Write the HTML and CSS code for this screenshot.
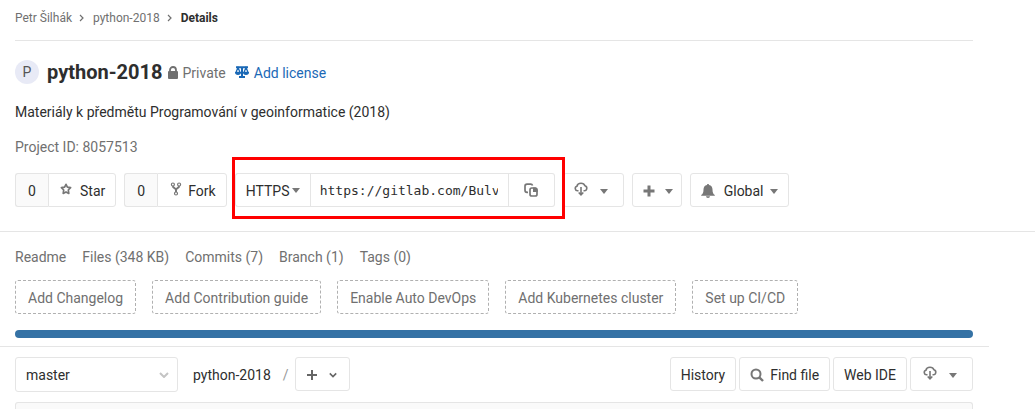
FILE: index.html
```html
<!DOCTYPE html>
<html lang="en">
<head>
<meta charset="utf-8">
<meta name="viewport" content="width=device-width, initial-scale=1">
<title>Details · python-2018</title>
<link rel="stylesheet" href="styles.css">
</head>
<body>
<svg class="sprite" aria-hidden="true">
  <symbol id="cloud" viewBox="0 0 14 14"><path d="M4.500 8.800H3.600a2.300 2.300 0 0 1-.7-4.500C3.300 2.300 5 1.300 7 1.300c2 0 3.400.9 3.900 2.400a2.600 2.600 0 0 1-.6 5.100h-.8M7 5v8M4.700 10.500 7 12.800l2.300-2.300" fill="none" stroke="currentColor" stroke-width="1.600"/></symbol>
  <symbol id="caret" viewBox="0 0 8 5"><path d="M0 0h8L4 5z" fill="currentColor"/></symbol>
  <symbol id="chevron" viewBox="0 0 10 6"><path d="m1 1 4 4 4-4" fill="none" stroke="currentColor" stroke-width="2"/></symbol>
  <symbol id="next" viewBox="0 0 6 8"><path d="m1 1 3 3-3 3" fill="none" stroke="currentColor" stroke-width="1.200"/></symbol>
</svg>
<header class="top">
  <nav class="breadcrumbs" aria-label="Breadcrumb">
    <a href="#">Petr Šilhák</a><svg class="next"><use href="#next"/></svg><a href="#">python-2018</a><svg class="next"><use href="#next"/></svg><strong>Details</strong>
  </nav>
</header>
<section class="project">
  <div class="heading">
    <span class="avatar">P</span>
    <h1>python-2018</h1>
    <span class="private"><svg class="lock" viewBox="0 0 10 13"><path d="M2 6V4a3 3 0 0 1 6 0v2" fill="none" stroke="currentColor" stroke-width="1.800"/><rect y="5" width="10" height="8" rx="1" fill="currentColor"/></svg>Private</span>
    <a class="license" href="#"><svg class="scale" viewBox="0 0 14 12"><path d="M1 1.200h12M7 1v9M4 11h6" fill="none" stroke="currentColor" stroke-width="2"/><path d="M3 1.500.9 6.500h4.200zM11 1.500 8.900 6.500h4.200z" fill="none" stroke="currentColor" stroke-width="1.300"/><path d="M0 6h6a3 3 0 0 1-6 0zM8 6h6a3 3 0 0 1-6 0z" fill="currentColor"/></svg>Add license</a>
  </div>
  <p class="description">Materiály k předmětu Programování v geoinformatice (2018)</p>
  <p class="project-id">Project ID: 8057513</p>
  <div class="actions">
    <div class="group"><span class="count">0</span><button class="button" type="button"><svg class="icon star" viewBox="0 0 12 12"><path d="m6 1.300 1.400 2.900 3.200.5-2.300 2.300.5 3.400L6 8.900l-2.800 1.500.5-3.400L1.400 4.700l3.200-.5z" fill="none" stroke="currentColor" stroke-width="1.700" stroke-linejoin="round"/></svg>Star</button></div>
    <div class="group"><span class="count">0</span><button class="button" type="button"><svg class="icon fork" viewBox="0 0 12 14"><g fill="none" stroke="currentColor"><path d="M2.800 4.200C3 6.500 6 5.800 6 8v2M9.200 4.200C9 6.500 6 5.800 6 8" stroke-width="2"/><circle cx="2.900" cy="2.500" r="1.500" stroke-width="1.200"/><circle cx="9.100" cy="2.500" r="1.500" stroke-width="1.200"/><circle cx="6" cy="11.500" r="1.500" stroke-width="1.200"/></g></svg>Fork</button></div>
    <div class="group clone">
      <div class="select protocol"><select aria-label="Clone protocol"><option>HTTPS</option></select><svg class="caret"><use href="#caret"/></svg></div>
      <input class="url" type="text" aria-label="Repository URL" value="https://gitlab.com/Bulv" readonly>
      <button class="button copy" type="button" aria-label="Copy URL"><svg class="icon" viewBox="0 0 14 14"><path d="M4 9.300H3a2 2 0 0 1-2-2V3.200a2 2 0 0 1 2-2h3.700a2 2 0 0 1 1.900 1.300" fill="none" stroke="currentColor" stroke-width="1.700"/><rect x="6" y="5" width="7" height="8" rx="1.800" fill="none" stroke="currentColor" stroke-width="1.700"/><path d="M9 4.500h2.500L13.700 7v2H9z" fill="currentColor"/></svg></button>
    </div>
    <button class="button dropdown" type="button" aria-label="Download"><svg class="icon cloud"><use href="#cloud"/></svg><svg class="caret"><use href="#caret"/></svg></button>
    <button class="button add" type="button" aria-label="Create"><svg class="plus" viewBox="0 0 12 12"><path d="M6 .5v11M.5 6h11" stroke="currentColor" stroke-width="3"/></svg><svg class="caret"><use href="#caret"/></svg></button>
    <button class="button global" type="button"><svg class="icon" viewBox="0 0 14 14"><path d="M7 0c.7 0 1 .4 1 1 2.400.5 3.500 2.200 3.500 4.500 0 3 .7 4.600 2.300 5.500v.8H.2V11c1.600-.9 2.300-2.500 2.300-5.500C2.500 3.200 3.600 1.500 6 1c0-.6.300-1 1-1zM5 12.300h4a2 1.700 0 0 1-4 0z" fill="currentColor"/></svg>Global<svg class="caret"><use href="#caret"/></svg></button>
  </div>
</section>
<section class="overview">
  <nav class="stats" aria-label="Repository"><a href="#">Readme</a><a href="#">Files (348 KB)</a><a href="#">Commits (7)</a><a href="#">Branch (1)</a><a href="#">Tags (0)</a></nav>
  <div class="suggestions"><a href="#">Add Changelog</a><a href="#">Add Contribution guide</a><a href="#">Enable Auto DevOps</a><a href="#">Add Kubernetes cluster</a><a href="#">Set up CI/CD</a></div>
  <div class="languages"></div>
</section>
<main class="files">
  <div class="toolbar">
    <div class="select branch"><select aria-label="Branch"><option>master</option></select><svg class="chevron"><use href="#chevron"/></svg></div>
    <a class="path" href="#">python-2018</a><span class="slash">/</span>
    <button class="button new" type="button" aria-label="Add to tree"><svg class="plus" viewBox="0 0 12 12"><path d="M6 1v10M1 6h10" stroke="currentColor" stroke-width="2"/></svg><svg class="chevron small"><use href="#chevron"/></svg></button>
    <div class="tools">
      <button class="button" type="button">History</button>
      <button class="button find" type="button"><svg class="icon" viewBox="0 0 14 14"><circle cx="6" cy="6" r="4.500" fill="none" stroke="currentColor" stroke-width="2"/><path d="m9.300 9.300 3.700 3.700" stroke="currentColor" stroke-width="2.400"/></svg>Find file</button>
      <button class="button" type="button">Web IDE</button>
      <button class="button dropdown" type="button" aria-label="Download"><svg class="icon cloud"><use href="#cloud"/></svg><svg class="caret"><use href="#caret"/></svg></button>
    </div>
  </div>
  <div class="panel"></div>
</main>
</body>
</html>
```
FILE: styles.css
```css
* { box-sizing: border-box; }
html { height: 100%; }
body {
  margin: 0;
  height: 100%;
  overflow: hidden;
  display: flex;
  flex-direction: column;
  background: #fff;
  color: #2e2e2e;
  font: 14px/20px Roboto, sans-serif;
}
a { color: inherit; text-decoration: none; }
svg { flex: none; }
p { margin: 0; }
.sprite { position: absolute; width: 0; height: 0; }
.top, .project, .overview { padding: 0 62px 0 15px; }
.breadcrumbs {
  display: flex;
  align-items: center;
  height: 41px;
  padding-bottom: 5px;
  border-bottom: 1px solid #e5e5e5;
  font-size: 12px;
  color: #707070;
}
.breadcrumbs strong { color: #2e2e2e; }
.next { width: 6px; height: 8px; margin: 0 8px 0 7px; }
.heading { display: flex; align-items: center; height: 24px; margin-top: 19px; }
.avatar {
  width: 24px;
  height: 24px;
  margin-right: 8px;
  border-radius: 50%;
  background: #e8eaf6;
  color: #555;
  line-height: 24px;
  text-align: center;
}
h1 { margin: 0 6px 0 0; font-size: 20px; line-height: 24px; }
.private, .license { display: flex; align-items: center; padding-top: 2px; }
.private { gap: 4px; color: #707070; }
.license { gap: 5px; margin-left: 9px; color: #1b69b6; }
.lock { width: 10px; height: 13px; margin-bottom: 2px; }
.scale { width: 14px; height: 12px; margin-bottom: 3px; }
.description { margin-top: 18px; }
.project-id { margin-top: 15px; color: #707070; }
.project { border-bottom: 1px solid #e5e5e5; padding-bottom: 24px; }
.actions { display: flex; gap: 8px; margin-top: 16px; }
.group { display: flex; }
.count, .button, .url, .select {
  height: 34px;
  border: 1px solid #e5e5e5;
  border-radius: 3px;
  background: #fff;
}
.count {
  width: 33px;
  background: #fafafa;
  border-right: 0;
  border-radius: 3px 0 0 3px;
  line-height: 34px;
  text-align: center;
}
.button {
  display: flex;
  align-items: center;
  margin: 0;
  padding: 2px 10px 0;
  color: #2e2e2e;
  font: inherit;
  white-space: nowrap;
}
.group .button { border-radius: 0 3px 3px 0; }
.button svg { color: #777; }
.icon { width: 14px; height: 14px; margin-right: 8px; }
.star { width: 12px; height: 12px; margin: 0 8px 4px 1px; }
.fork { width: 12px; margin: 0 6px 4px 2px; }
.caret { width: 8px; height: 5px; color: #777; }
.clone { position: relative; width: 320px; }
.clone::after {
  content: "";
  position: absolute;
  inset: -16px -10px -12px -3px;
  border: 3px solid #f00;
  pointer-events: none;
  z-index: 1;
}
.select { display: flex; align-items: center; position: relative; }
select {
  appearance: none;
  width: 100%;
  height: 100%;
  margin: 0;
  padding: 2px 10px 0;
  border: 0;
  background: none;
  color: #2e2e2e;
  font: inherit;
}
.select svg { position: absolute; right: 10px; pointer-events: none; }
.protocol { flex: none; width: 75px; border-right: 0; border-radius: 3px 0 0 3px; }
.url {
  flex: 1;
  min-width: 0;
  margin: 0;
  padding: 0 10px 0 9px;
  border-radius: 0;
  color: #2e2e2e;
  font: 13px "DejaVu Sans Mono", monospace;
}
.copy { width: 46px; padding-top: 0; justify-content: center; border-left: 0; }
.copy .icon { margin: 0; }
.cloud { margin: 0 12px 4px 0; }
.actions .dropdown { width: 61px; justify-content: flex-end; padding-right: 15px; }
.plus { width: 12px; height: 12px; }
.add { gap: 10px; padding: 2px 8px 0 10px; }
.global { gap: 6px; }
.global .icon { margin-right: 3px; }
.stats { display: flex; gap: 16px; margin-top: 15px; color: #707070; }
.suggestions { display: flex; gap: 16px; margin-top: 13px; color: #707070; }
.suggestions a { padding: 7px 12px 6px; height: 34px; line-height: 20px; border: 1px dashed #b0b0b0; border-radius: 3px; }
.languages { height: 8px; margin: 16px 0 8px; border-radius: 4px; background: #3572a5; }
.files {
  flex: 1;
  display: flex;
  flex-direction: column;
  min-height: 0;
  margin-right: 46px;
  padding: 10px 16px 0 15px;
  border-top: 1px solid #e5e5e5;
}
.toolbar { display: flex; }
.branch { height: 35px; width: 163px; margin-right: 15px; }
.branch select { padding-top: 0; }
.path, .slash { padding-top: 8px; }
.chevron { width: 10px; height: 6px; }
.branch .chevron { color: #c4c4c4; right: 8px; }
.slash { margin: 0 6px 0 12px; color: #999; }
.new { width: 55px; justify-content: space-between; padding-right: 12px; }
.button .small { width: 8px; color: #666; }
.new .plus { color: #666; }
.tools { display: flex; gap: 3px; margin-left: auto; }
.find .icon { margin-right: 6px; }
.tools .dropdown { width: 63px; padding-right: 15px; justify-content: flex-end; }
.panel { flex: 1; margin-top: 10px; border: 1px solid #e5e5e5; border-bottom: 0; border-radius: 3px 3px 0 0; background: #fafafa; }
```
